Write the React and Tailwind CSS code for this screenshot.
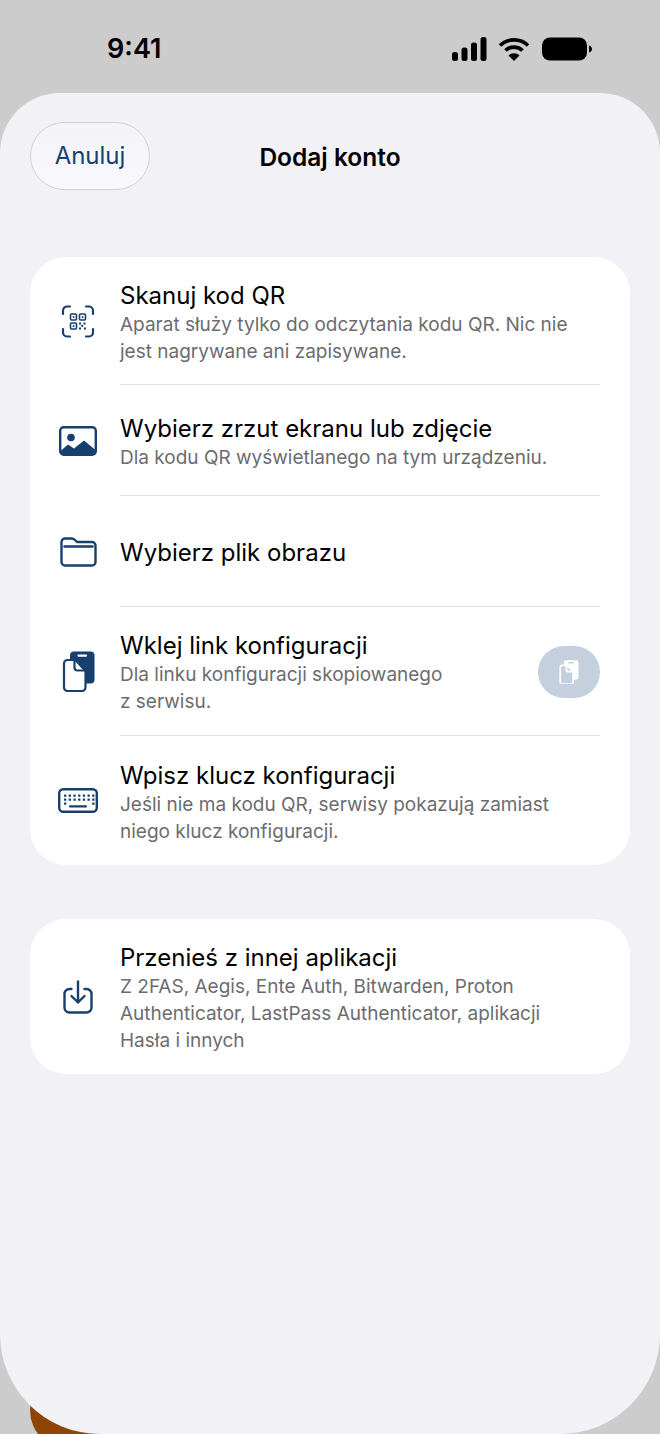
const C = "#17406f";

function QrIcon() {
  return (
    <svg width="34" height="33" viewBox="0 0 34 33" fill="none" stroke={C} strokeLinecap="round">
      <g strokeWidth="2.2">
        <path d="M2 9V5.5A4 4 0 0 1 6 1.5H9M25 1.5H28A4 4 0 0 1 32 5.5V9M32 24V27.5A4 4 0 0 1 28 31.500H25M9 31.500H6A4 4 0 0 1 2 27.5V24" />
      </g>
      <g strokeWidth="1.6">
        <rect x="9.500" y="9" width="6" height="6" rx="1" />
        <rect x="18.500" y="9" width="6" height="6" rx="1" />
        <rect x="9.500" y="18" width="6" height="6" rx="1" />
      </g>
      <g fill={C} stroke="none">
        <rect x="11.700" y="11.200" width="1.700" height="1.700" />
        <rect x="20.700" y="11.200" width="1.700" height="1.700" />
        <rect x="11.700" y="20.200" width="1.700" height="1.700" />
        <rect x="18" y="17.500" width="2" height="2" />
        <rect x="22.500" y="17.500" width="2" height="2" />
        <rect x="20.200" y="19.800" width="2" height="2" />
        <rect x="18" y="22.500" width="2" height="2" />
        <rect x="23" y="22.500" width="2" height="2" />
      </g>
    </svg>
  );
}

function ImageIcon() {
  return (
    <svg width="38" height="30" viewBox="0 0 38 30" fill="none">
      <rect x="1.200" y="1.200" width="35.600" height="27.600" rx="3.500" stroke={C} strokeWidth="2.400" />
      <circle cx="12" cy="11.500" r="3.800" fill={C} />
      <path d="M1.500 25L9 18.500L15 22.500L25 14.500L36.500 24V26A3 3 0 0 1 33.500 29H4.500A3 3 0 0 1 1.500 26Z" fill={C} />
    </svg>
  );
}

function FolderIcon() {
  return (
    <svg width="37" height="30" viewBox="0 0 37 30" fill="none" stroke={C} strokeWidth="2.400">
      <path d="M1.500 5A3.500 3.500 0 0 1 5 1.500H11.500C13 1.500 14 2 15 3L17 5H32A3.500 3.500 0 0 1 35.500 8.500V25A3.500 3.500 0 0 1 32 28.500H5A3.500 3.500 0 0 1 1.500 25Z" strokeLinejoin="round" />
      <path d="M4.500 9.500H32.500" strokeLinecap="round" />
    </svg>
  );
}

function PasteIcon({ color = C, size = 1, bg = "#ffffff", sw = 2.2 }) {
  return (
    <svg width={33 * size} height={41 * size} viewBox="0 0 33 41" fill="none">
      <rect x="8" y="0.500" width="24.500" height="32" rx="4" fill={color} />
      <rect x="15.500" y="3.500" width="9.500" height="2.200" rx="1" fill={bg} />
      <path d="M5.500 9H13.500L23.500 20V36.500A3.500 3.500 0 0 1 20 40H5.500A3.500 3.500 0 0 1 2 36.500V12.500A3.500 3.500 0 0 1 5.500 9Z" fill={bg} stroke={color} strokeWidth={sw} strokeLinejoin="round" />
      <path d="M12.500 9.500V16.500A3 3 0 0 0 15.500 19.500H23" stroke={color} strokeWidth={sw} />
    </svg>
  );
}

function KeyboardIcon() {
  const keys = [];
  for (let y = 0; y < 3; y++) {
    for (let x = 0; x < 7; x++) {
      if (y === 2 && x > 0 && x < 6) continue;
      keys.push(<rect key={`${x}-${y}`} x={6 + x * 4.700} y={6.500 + y * 4} width="2.300" height="2.300" rx="0.300" fill={C} />);
    }
  }
  return (
    <svg width="40" height="25" viewBox="0 0 40 25" fill="none">
      <rect x="1.200" y="1.200" width="37.600" height="22.600" rx="4" stroke={C} strokeWidth="2.400" />
      {keys}
      <rect x="11" y="17.300" width="18" height="2.200" rx="1" fill={C} />
    </svg>
  );
}

function ImportIcon() {
  return (
    <svg width="30" height="34" viewBox="0 0 30 34" fill="none" stroke={C} strokeWidth="2.400" strokeLinecap="round" strokeLinejoin="round">
      <path d="M8.500 9H6.500A5 5 0 0 0 1.500 14V27.500A5 5 0 0 0 6.500 32.500H23.500A5 5 0 0 0 28.500 27.500V14A5 5 0 0 0 23.500 9H21.500" />
      <path d="M15 1.500V22.500M8.500 16L15 22.500L21.500 16" />
    </svg>
  );
}

function Row({ icon, title, sub, pad, last, action }) {
  return (
    <div className="flex items-stretch">
      <div className="w-[90px] shrink-0 pl-[6px] flex items-center justify-center">{icon}</div>
      <div className={`flex-1 mr-[30px] flex items-center ${pad} ${last ? "" : "border-b border-[#dfdfe3]"}`}>
        <div className="flex-1 min-w-0 pt-[4px]">
          <div className="text-[24px] leading-[30px] text-black">{title}</div>
          {sub && (
            <div className="text-[19px] leading-[27px] text-[#6c6c70]">
              {sub.map((l) => (
                <div key={l} className="whitespace-nowrap">{l}</div>
              ))}
            </div>
          )}
        </div>
        {action}
      </div>
    </div>
  );
}

export default function App() {
  return (
    <div className="relative w-[660px] h-[1434px] overflow-hidden bg-[#cccccc] [font-family:Inter,'Noto_Sans',sans-serif]">
      <div className="absolute left-[30px] top-[1370px] w-[80px] h-[80px] rounded-full bg-[#8f4406]" />
      <div className="relative h-[93px] flex justify-between items-start">
        <div className="ml-[107px] mt-[32px] text-[27px] leading-[34px] font-semibold text-black">9:41</div>
        <div className="mr-[68px] mt-[37px] flex items-center">
          <svg className="mr-[11px]" width="35" height="24" viewBox="0 0 35 24" fill="#000">
            <rect x="0" y="15" width="6" height="9" rx="2.500" />
            <rect x="9.500" y="10.500" width="6" height="13.500" rx="2.500" />
            <rect x="19" y="5.500" width="6" height="18.500" rx="2.500" />
            <rect x="28.500" y="0" width="6" height="24" rx="2.500" />
          </svg>
          <svg className="mr-[12px]" width="32" height="24" viewBox="0 0 32 24" fill="none" stroke="#000" strokeWidth="3.600">
            <path d="M2 8.500C9.500 1 22.500 1 30 8.500" />
            <path d="M7.500 13.500C12 9 20 9 24.500 13.500" />
            <path d="M16 24L10.500 18.500C13.500 15.500 18.500 15.500 21.500 18.500Z" fill="#000" stroke="none" />
          </svg>
          <svg width="50" height="24" viewBox="0 0 50 24" fill="#000">
            <rect x="0" y="0.500" width="45" height="23" rx="8" />
            <path d="M47 8.500C49 9 50 10.500 50 12S49 15 47 15.500Z" />
          </svg>
        </div>
      </div>

      <div className="relative h-[1341px] bg-[#f1f1f6] rounded-t-[60px] rounded-b-[100px]">
        <div className="relative h-[164px]">
          <div className="absolute left-[30px] top-[29px] w-[120px] h-[68px] rounded-[34px] bg-gradient-to-b from-[#f3f3f8] to-[#f8f8fd] border border-[#d0d0d6] flex items-center justify-center text-[24px] text-[#17406f]">
            Anuluj
          </div>
          <div className="absolute left-0 right-0 top-[47px] text-center text-[24.500px] leading-[34px] font-semibold text-black">Dodaj konto</div>
        </div>

        <div className="mx-[30px] bg-white rounded-[36px]">
          <Row icon={<QrIcon />} pad="h-[128px]" title="Skanuj kod QR" sub={["Aparat służy tylko do odczytania kodu QR. Nic nie", "jest nagrywane ani zapisywane."]} />
          <Row icon={<ImageIcon />} pad="h-[111px]" title="Wybierz zrzut ekranu lub zdjęcie" sub={["Dla kodu QR wyświetlanego na tym urządzeniu."]} />
          <Row icon={<FolderIcon />} pad="h-[111px]" title="Wybierz plik obrazu" />
          <Row
            icon={<PasteIcon />}
            pad="h-[129px]"
            title="Wklej link konfiguracji"
            sub={["Dla linku konfiguracji skopiowanego", "z serwisu."]}
            action={
              <div className="mt-[2px] w-[62px] h-[52px] rounded-[26px] bg-[#c5d0de] flex items-center justify-center shrink-0">
                <PasteIcon color="#ffffff" bg="#c5d0de" size={0.6} sw={2.8} />
              </div>
            }
          />
          <Row icon={<KeyboardIcon />} pad="h-[129px]" last title="Wpisz klucz konfiguracji" sub={["Jeśli nie ma kodu QR, serwisy pokazują zamiast", "niego klucz konfiguracji."]} />
        </div>

        <div className="mt-[54px] mx-[30px] bg-white rounded-[36px]">
          <Row icon={<ImportIcon />} pad="h-[155px]" last title="Przenieś z innej aplikacji" sub={["Z 2FAS, Aegis, Ente Auth, Bitwarden, Proton", "Authenticator, LastPass Authenticator, aplikacji", "Hasła i innych"]} />
        </div>
      </div>
    </div>
  );
}
